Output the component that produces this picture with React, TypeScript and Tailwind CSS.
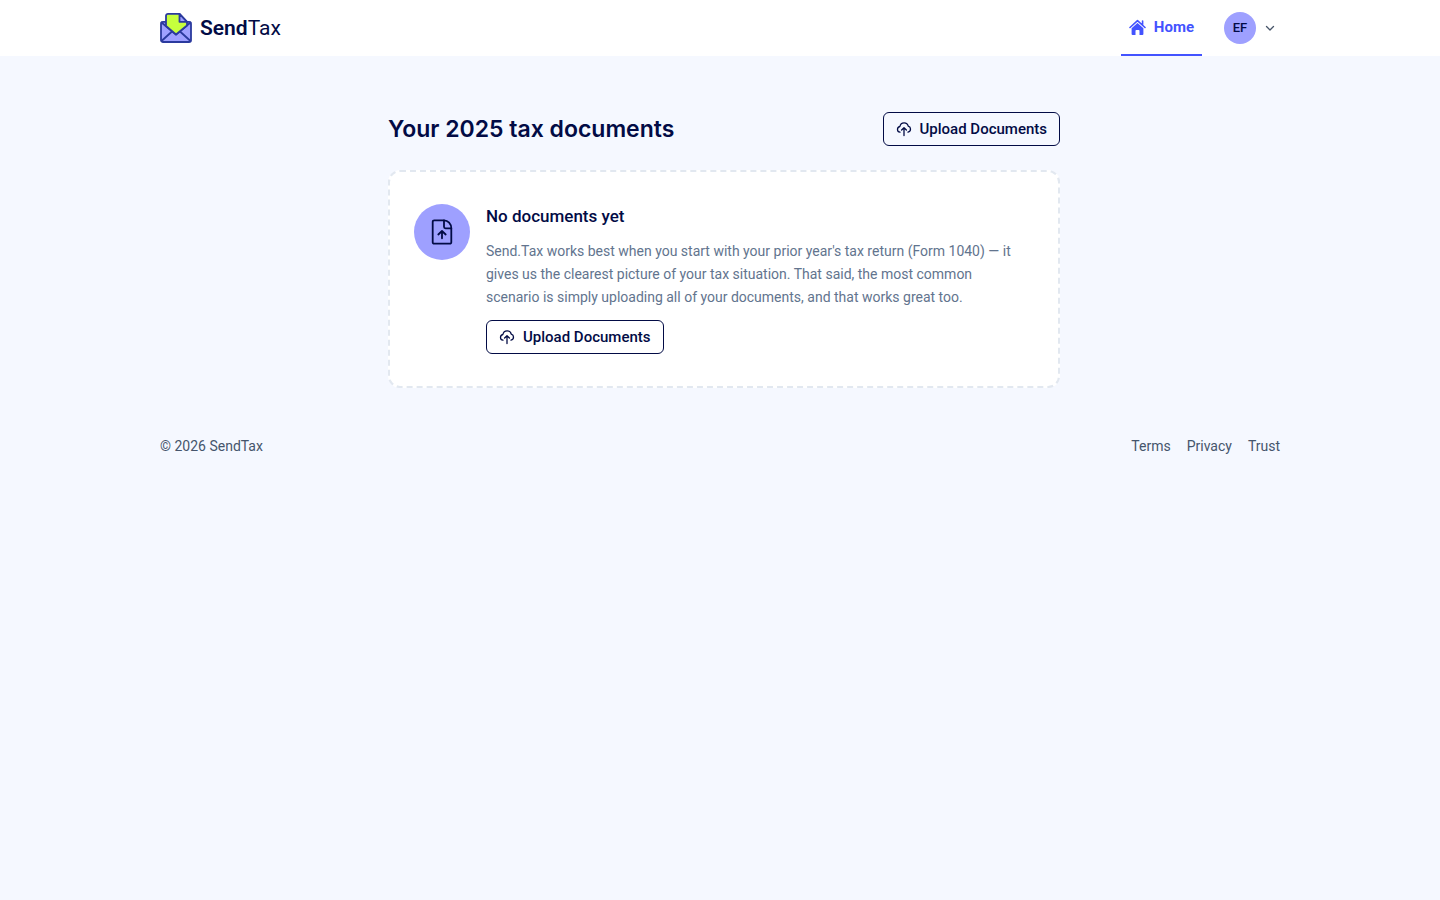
const UploadIcon = () => (
  <svg className="h-4 w-4" viewBox="0 0 16 16" fill="none" stroke="currentColor" strokeWidth="1.3" strokeLinecap="round" strokeLinejoin="round" aria-hidden="true">
    <path d="M4 11.2C2.4 11 1.5 9.900 1.500 8.400c0-1.500 1-2.600 2.400-2.900C4.300 3.200 6 1.800 8.100 1.800c2.100 0 3.700 1.300 4.100 3.300 1.400.4 2.300 1.500 2.300 2.900 0 1.600-1 2.900-2.500 3.200" />
    <path d="M8 14.600V7M5.600 9 8 6.700 10.400 9" />
  </svg>
);

const UploadButton = () => (
  <button
    type="button"
    className="inline-flex items-center gap-2 rounded-md border border-[#020b45] px-3 py-1.5 text-[15px] leading-5 font-medium whitespace-nowrap text-[#020b45]"
  >
    <UploadIcon />
    Upload Documents
  </button>
);

const Logo = () => (
  <a href="#" className="flex items-center gap-2 text-[#020b45]">
    <svg className="h-8 w-8" viewBox="0 0 32 32" fill="none" stroke="#2b3a9e" strokeWidth="1.8" strokeLinejoin="round" strokeLinecap="round" aria-hidden="true">
      <rect x="1" y="9.8" width="30" height="20.2" rx="2" fill="#9ea0ff" />
      <path d="M1.5 29 12 19.500M30.500 29 20 19.500" />
      <path d="M1.5 10.500 16 22.500 30.500 10.500" />
      <path d="M6 3.800a2 2 0 0 1 2-2h11.500l7.500 8v3.700L16 22.500 6 14z" fill="#c6ff3d" />
      <path d="M19.500 1.800 27 9.800h-7.500z" fill="#9ea0ff" />
    </svg>
    <span className="text-[21px] leading-7">
      <span className="font-semibold">Send</span>
      <span>Tax</span>
    </span>
  </a>
);

const Header = () => (
  <header className="bg-white">
    <div className="mx-auto flex h-14 max-w-[1120px] items-center justify-between">
      <Logo />
      <div className="flex h-full items-center gap-[22px]">
        <nav className="h-full">
          <a href="#" className="flex h-full items-center gap-2 border-b-2 border-[#4353ff] px-2 text-[15px] font-bold text-[#4353ff]">
            <svg className="h-[17px] w-[17px]" viewBox="0 0 17 17" fill="currentColor" aria-hidden="true">
              <path d="M1 8.500 8.500 1.700 16 8.500M13.600 2v3.500" fill="none" stroke="currentColor" strokeWidth="1.600" strokeLinecap="round" strokeLinejoin="round" />
              <path d="M8.500 4 14.400 9.300V15a1 1 0 0 1-1 1H10.500v-4.200a.8.8 0 0 0-.8-.8H7.300a.8.8 0 0 0-.8.8V16H3.600a1 1 0 0 1-1-1V9.300z" />
            </svg>
            Home
          </a>
        </nav>
        <button type="button" aria-label="Account menu" className="flex items-center gap-2 pr-1">
          <span className="flex h-8 w-8 items-center justify-center rounded-full bg-[#9ea0ff] text-[13px] font-medium text-[#020b45]">EF</span>
          <svg className="h-3 w-3" viewBox="0 0 12 12" fill="none" stroke="#475569" strokeWidth="1.3" strokeLinecap="round" strokeLinejoin="round" aria-hidden="true">
            <path d="M2.500 4.500 6 8l3.500-3.500" />
          </svg>
        </button>
      </div>
    </div>
  </header>
);

const EmptyState = () => (
  <section className="flex items-start gap-4 rounded-xl border-2 border-dashed border-slate-200 bg-white px-6 py-8">
    <div className="flex h-14 w-14 shrink-0 items-center justify-center rounded-full bg-[#9ea0ff] text-[#020b45]">
      <svg className="h-7 w-7" viewBox="0 0 28 28" fill="none" stroke="currentColor" strokeWidth="1.8" strokeLinecap="round" strokeLinejoin="round" aria-hidden="true">
        <path d="M16 2.300H6.200a1.500 1.500 0 0 0-1.500 1.500v20.400a1.500 1.500 0 0 0 1.500 1.500h15.600a1.500 1.500 0 0 0 1.500-1.500V10.300c0-4.400-3.300-8-7.300-8z" />
        <path d="M16 2.300v6.500a1.500 1.500 0 0 0 1.500 1.500h5.800" />
        <path d="M14 20.300v-7M10.300 16.500 14 13l3.700 3.500" />
      </svg>
    </div>
    <div className="min-w-0">
      <h2 className="text-[17px] leading-6 font-medium text-[#020b45]">No documents yet</h2>
      <p className="mt-3 mb-[11px] max-w-[540px] text-sm leading-[23px] text-slate-500">
        Send.Tax works best when you start with your prior year's tax return (Form 1040) — it gives us the clearest
        picture of your tax situation. That said, the most common scenario is simply uploading all of your documents,
        and that works great too.
      </p>
      <UploadButton />
    </div>
  </section>
);

const Footer = () => (
  <footer className="mx-auto flex max-w-[1120px] items-center justify-between text-sm leading-5 text-slate-600">
    <p>© 2026 SendTax</p>
    <nav className="flex gap-4">
      <a href="#">Terms</a>
      <a href="#">Privacy</a>
      <a href="#">Trust</a>
    </nav>
  </footer>
);

const App = () => {
  return (
    <div className="min-h-screen bg-[#f5f8ff] font-['Roboto',sans-serif]">
      <Header />
      <main className="mx-auto max-w-[1120px] pt-14 pr-4 pb-12 pl-6">
        <div className="mx-auto max-w-[672px]">
          <div className="mb-6 flex items-center justify-between">
            <h1 className="font-['Inter',sans-serif] text-[23px] leading-8 font-semibold text-[#020b45]">Your 2025 tax documents</h1>
            <UploadButton />
          </div>
          <EmptyState />
        </div>
      </main>
      <Footer />
    </div>
  );
};

export default App;
